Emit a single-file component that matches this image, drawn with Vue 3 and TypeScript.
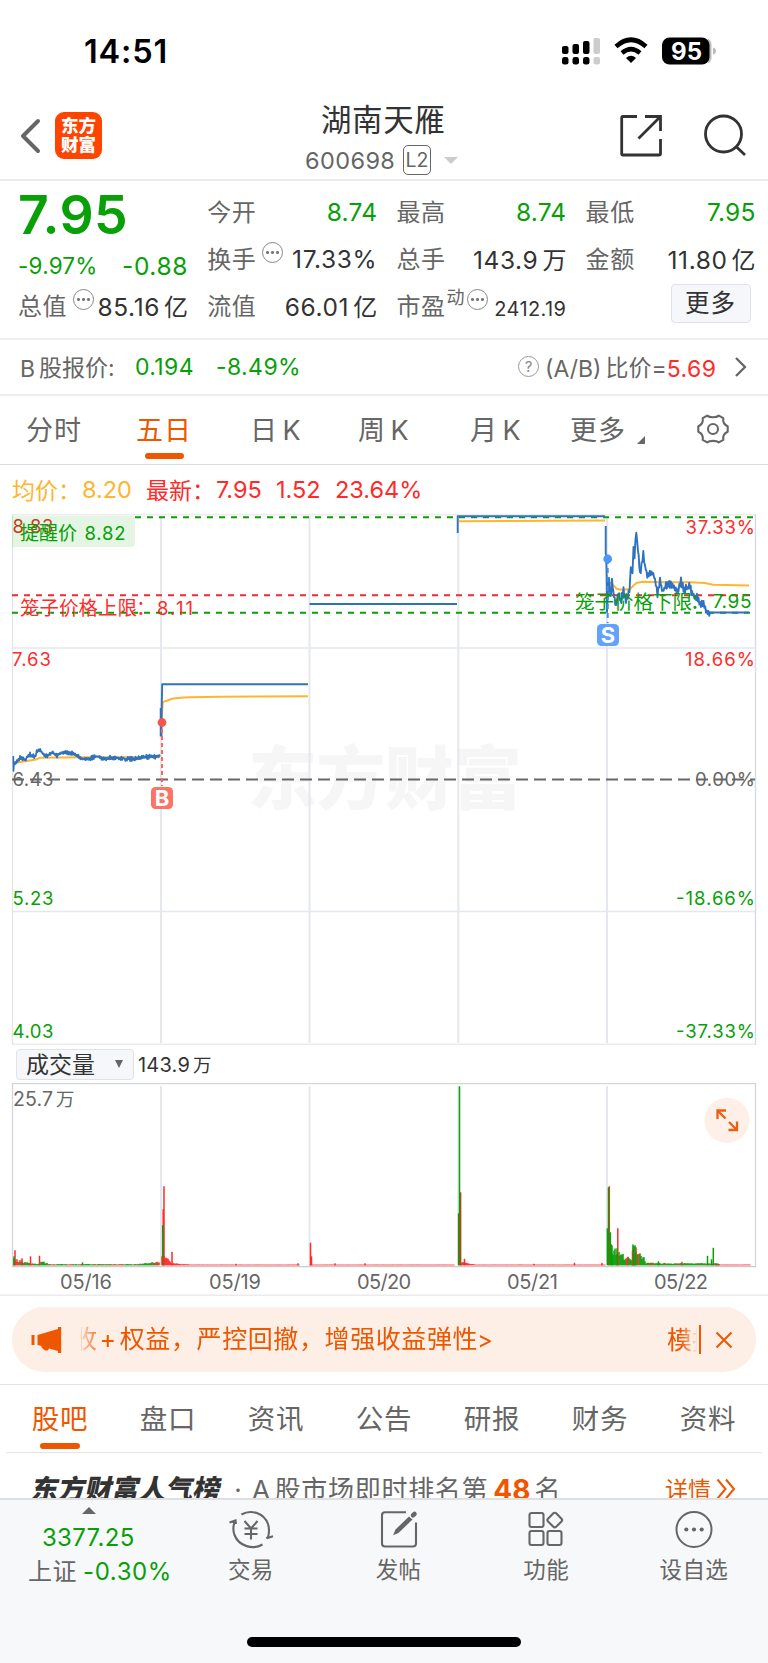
<script setup lang="ts">
type Pt = [number, number]
type Bar = { x: number; h: number; c: string }

const RED = '#ff2a2a'
const GREEN = '#07a007'

const periods = ['分时', '五日', '日 K', '周 K', '月 K', '更多']
const sections = ['股吧', '盘口', '资讯', '公告', '研报', '财务', '资料']
const dates = [
  { t: '05/16', x: 60, w: 52 },
  { t: '05/19', x: 209, w: 52 },
  { t: '05/20', x: 357, w: 54 },
  { t: '05/21', x: 507, w: 51 },
  { t: '05/22', x: 654, w: 54 },
]
const columns = [161, 309.5, 458.3, 607]

let seed = 7
function rand(): number {
  seed = (seed * 16807) % 2147483647
  return seed / 2147483647
}

function toPath(pts: Pt[]): string {
  return pts.map((p, i) => `${i ? 'L' : 'M'}${p[0].toFixed(1)} ${p[1].toFixed(1)}`).join('')
}

/* Interpolates between key prices and adds minute-level jitter. */
function jitter(keys: Pt[], amp: number, step: number): Pt[] {
  const out: Pt[] = []
  let sign = 1
  for (let i = 0; i < keys.length - 1; i++) {
    const [x0, y0] = keys[i]
    const [x1, y1] = keys[i + 1]
    const n = Math.max(1, Math.round((x1 - x0) / step))
    for (let k = 0; k < n; k++) {
      sign = -sign
      const t = k / n
      out.push([x0 + (x1 - x0) * t, y0 + (y1 - y0) * t + sign * rand() * amp])
    }
  }
  out.push(keys[keys.length - 1])
  return out
}

const day1 = toPath([
  [13.3, 756], [13.5, 771],
  ...jitter([[14, 762], [16, 763], [20, 757.5], [25, 760], [30, 754.5], [35, 757], [37.5, 750], [41, 751], [45, 756.5], [52, 753], [57, 755.5], [62, 752.5], [72, 753.5], [80, 757], [85, 760], [97, 756], [103, 759.5], [110, 757], [127, 759], [134, 759], [144, 757], [160, 756.5]], 2.3, 0.8),
])
const avg1 = toPath([[14, 764], [17, 762.5], [36, 759.5], [40, 757.7], [83, 757.3], [160, 757.3]])
const day2 = 'M160.7 708V736.5M161.5 736V717L162.2 684.3H308'
const avg2 = 'M161.8 718L162.7 703Q163.5 701 167 700.7L172 698.8Q180 697.4 190 697.2L220 696.7L308 696.3'
const day5 = toPath([
  [606, 554], [606.5, 569], [607, 612], [608.5, 580],
  ...jitter([[609, 580], [610.7, 598], [612, 580], [614, 596], [616, 608], [618.5, 591], [620.5, 603], [623.5, 590], [626, 600], [629.5, 592], [630.8, 567], [632.5, 573], [633.5, 547], [634.5, 556], [636.3, 532], [638, 550], [640, 574], [643.3, 554], [645, 567], [648, 577], [651.5, 572], [655, 579], [657.5, 595], [660, 578], [662, 591], [666, 586], [670, 584], [674, 587], [677.5, 592], [681, 581], [683.5, 590], [690, 586], [692, 594], [697, 597], [700, 604], [703.5, 602], [706, 611], [710, 612.5]], 4, 0.8),
  [749, 612.5],
])
const avg5 = toPath([[607, 575], [608, 581], [613, 585], [617, 589], [622, 589.7], [630, 589], [634, 585], [637, 582.7], [643, 581.8], [660, 582.3], [690, 582.2], [705, 583], [713, 584.7], [749, 585.4]])

function tail(x0: number, x1: number, h0: number, h1: number, c: (i: number) => string): Bar[] {
  const out: Bar[] = []
  let i = 0
  for (let x = x0; x < x1; x += 1) {
    const t = (x - x0) / (x1 - x0)
    out.push({ x, h: Math.max(0.6, (h0 + (h1 - h0) * t) * (0.6 + rand() * 0.6)), c: c(i++) })
  }
  return out
}
const mix = (p: number) => () => (rand() < p ? RED : GREEN)

const bars: Bar[] = [
  ...tail(14, 29, 6, 2.5, mix(0.4)),
  ...tail(29, 41, 2, 1.5, mix(0.4)),
  ...tail(41, 50, 4, 1, mix(0.1)),
  ...tail(50, 138, 1.1, 1.1, mix(0.4)),
  ...tail(138, 160, 1.2, 3.5, mix(0.4)),
  ...tail(164, 172, 12, 1.5, () => RED),
  ...tail(172, 190, 1.8, 1, () => RED),
  ...tail(190, 300, 0.6, 0.6, () => RED),
  ...tail(310, 455, 0.6, 0.6, () => RED),
  ...tail(460, 475, 3, 1, () => RED),
  ...tail(475, 606, 0.6, 0.6, () => RED),
  { x: 609.3, h: 79, c: RED }, { x: 607.4, h: 37, c: GREEN }, { x: 608.5, h: 78, c: GREEN },
  ...tail(612, 634, 16, 4, mix(0.12)),
  ...tail(633, 646, 20, 5, mix(0.05)),
  ...tail(646, 720, 2.2, 1.8, mix(0.2)),
  ...tail(716, 751, 0.6, 0.6, () => RED),
  { x: 15, h: 15, c: RED }, { x: 14, h: 9, c: GREEN }, { x: 22, h: 7, c: RED }, { x: 30.5, h: 9, c: RED },
  { x: 39.5, h: 9.5, c: RED }, { x: 82.5, h: 3, c: GREEN },
  { x: 164, h: 79, c: RED }, { x: 163.2, h: 56, c: RED }, { x: 162.7, h: 40, c: GREEN }, { x: 162, h: 9, c: RED },
  { x: 172, h: 13.5, c: RED }, { x: 310.5, h: 22.5, c: RED }, { x: 311.5, h: 9, c: RED }, { x: 298, h: 2, c: RED },
  { x: 335, h: 2, c: RED }, { x: 365, h: 2, c: RED }, { x: 236, h: 1.5, c: RED },
  { x: 458.6, h: 52, c: '#c33c1c' }, { x: 460.6, h: 73, c: '#c33c1c' }, { x: 459.5, h: 179, c: GREEN },
  { x: 464.5, h: 6.5, c: RED }, { x: 534, h: 1.5, c: RED }, { x: 574.5, h: 2.5, c: RED }, { x: 602, h: 2.5, c: RED },
  { x: 610.3, h: 33, c: GREEN },
  { x: 611.2, h: 21, c: GREEN }, { x: 612, h: 20, c: GREEN }, { x: 617.8, h: 37, c: RED }, { x: 617, h: 17, c: GREEN },
  { x: 627.5, h: 8, c: RED }, { x: 632.5, h: 15, c: RED }, { x: 636, h: 18, c: RED }, { x: 633.5, h: 18.5, c: GREEN }, { x: 635, h: 20, c: GREEN },
  { x: 658.5, h: 4, c: GREEN }, { x: 682, h: 3.5, c: RED },
  { x: 707.5, h: 9.5, c: GREEN }, { x: 711.5, h: 6, c: GREEN }, { x: 713.3, h: 17.5, c: GREEN },
]
</script>

<template>
  <div class="page">
    <div class="status">
      <span class="clock">14:51</span>
      <svg class="status-icons" width="160" height="30" viewBox="560 36 160 30">
        <g>
          <rect x="562" y="46" width="6.5" height="8" rx="2" /><rect x="572.5" y="44" width="6.5" height="10" rx="2" />
          <rect x="583" y="41" width="6.5" height="13" rx="2" /><rect x="593.5" y="38" width="6.5" height="16" rx="2" fill="#ccc" />
          <rect x="562" y="57" width="6.5" height="7.6" rx="2.4" /><rect x="572.5" y="57" width="6.5" height="7.6" rx="2.4" />
          <rect x="583" y="57" width="6.5" height="7.6" rx="2.4" /><rect x="593.5" y="57" width="6.5" height="7.6" rx="2.4" fill="#ccc" />
        </g>
        <path d="M616 46.5Q631 33 646 46.5" fill="none" stroke="#000" stroke-width="4.6" />
        <path d="M622 53Q631 45.2 640 53" fill="none" stroke="#000" stroke-width="4.4" />
        <path d="M626 58Q631 53.6 636 58L631 63Z" />
        <path d="M708 38.5Q711.500 40.500 711.500 45V57Q711.500 61.500 708 63.500Z" fill="#bbb" />
        <rect x="662" y="37.500" width="47.500" height="27" rx="7.500" />
        <path d="M713 47.500Q716 48.500 716 51T713 54.500Z" fill="#bbb" />
        <text x="671" y="60" fill="#fff" font-size="24" font-weight="700" textLength="31">95</text>
      </svg>
    </div>

    <header class="nav">
      <svg class="back" width="24" height="38" viewBox="0 0 24 38"><path d="M20 4L5 19L20 34" fill="none" stroke="#666" stroke-width="4" stroke-linecap="round" stroke-linejoin="round" /></svg>
      <div class="logo"><span>东方</span><span>财富</span></div>
      <div class="title-box">
        <div class="title">湖南天雁</div>
        <div class="code"><span>600698</span><b>L2</b><i class="caret"></i></div>
      </div>
      <svg class="nav-icons" width="128" height="44" viewBox="620 114 128 44" fill="none" stroke="#333" stroke-width="2.8">
        <path d="M637 116.500H623Q621.700 116.500 621.700 118V153.500Q621.700 155 623 155H659Q660.500 155 660.500 153.500V139M645 116.500H660.500V131M660 117L638.500 138.500" />
        <circle cx="723.500" cy="134" r="18" /><path d="M736 146.500L745 155" />
      </svg>
    </header>

    <section class="quote">
      <div class="price">
        <strong>7.95</strong>
        <div class="change"><span>-9.97%</span><em>-0.88</em></div>
      </div>
      <div class="cell"><label>今开</label><span class="up">8.74</span></div>
      <div class="cell"><label>最高</label><span class="up">8.74</span></div>
      <div class="cell"><label>最低</label><span class="up">7.95</span></div>
      <div class="cell"><label>换手</label><i class="dots"></i><span>17.33%</span></div>
      <div class="cell"><label>总手</label><span>143.9<u>万</u></span></div>
      <div class="cell"><label>金额</label><span>11.80<u>亿</u></span></div>
      <div class="cell"><label>总值</label><i class="dots"></i><span>85.16<u>亿</u></span></div>
      <div class="cell"><label>流值</label><span>66.01<u>亿</u></span></div>
      <div class="cell pe"><label>市盈</label><sup>动</sup><i class="dots"></i><span class="small">2412.19</span></div>
      <div class="cell end"><button>更多</button></div>
    </section>

    <section class="bshare">
      <span class="b-label">B<u>股报价:</u></span>
      <span class="b-val">0.194</span>
      <span class="b-pct">-8.49%</span>
      <i class="help">?</i>
      <span class="ratio">(A/B)<u>比价=</u><b>5.69</b></span>
      <svg width="14" height="22" viewBox="0 0 14 22"><path d="M2 2L11 11L2 20" fill="none" stroke="#666" stroke-width="2.300" /></svg>
    </section>

    <nav class="periods">
      <span v-for="(p, i) in periods" :key="p" :class="['p' + i, { on: i === 1 }]">{{ p }}</span>
      <svg class="corner" width="8" height="8" viewBox="0 0 8 8"><path d="M8 0V8H0Z" fill="#666" /></svg>
      <svg class="gear" width="32" height="30" viewBox="0 0 32 30" fill="none" stroke="#666" stroke-width="2.100" stroke-linejoin="round">
        <path d="M10.200 1.600C12.500 3.700 19.500 3.700 21.800 1.600L26.300 4.200C25.700 8 27.500 11 30.700 12.300V17.700C27.500 19 25.700 22 26.300 25.800L21.800 28.400C19.500 26.300 12.500 26.300 10.200 28.400L5.700 25.800C6.300 22 4.500 19 1.300 17.700V12.300C4.500 11 6.300 8 5.700 4.200Z" />
        <circle cx="16" cy="15" r="5" />
      </svg>
    </nav>

    <div class="legend">
      <span class="avg cn">均价：</span><span class="avg n1">8.20</span>
      <span class="cn">最新：</span><span class="n2">7.95</span><span class="n3">1.52</span><span class="n4">23.64%</span>
    </div>

    <svg class="chart" width="768" height="531" viewBox="0 514 768 531">
      <text x="248" y="804" class="mark" textLength="274">东方财富</text>
      <g stroke="#e4e8ee" stroke-width="2" fill="none">
        <path v-for="x in columns" :key="x" :d="`M${x} 516V1043`" />
        <path d="M12 648H755M12 911.500H755" stroke-width="1.500" />
        <path d="M12 514.500H756M12 1044.500H756" stroke="#ececec" />
        <path d="M12.500 514V1045" stroke="#e2e4e8" stroke-width="1.200" />
        <path d="M755.500 514V1045" stroke="#d8dbe2" stroke-width="1.400" />
      </g>
      <g font-size="18.500">
        <text x="12.500" y="533" fill="#e0311c" textLength="41">8.83</text>
        <path d="M12 516H131Q135 516 135 520V543Q135 547 131 547H12Z" fill="#07a007" fill-opacity=".11" />
        <text x="20" y="539.500" :fill="GREEN" font-size="19" textLength="57">提醒价</text><text x="84.500" y="539.500" :fill="GREEN" textLength="41">8.82</text>
      </g>
      <g fill="none" stroke-width="2" stroke-dasharray="6 6">
        <path d="M135 517.300H755" :stroke="GREEN" />
        <path d="M12 595.300H755" stroke="#ee2a35" />
        <path d="M12 612.700H755" :stroke="GREEN" />
        <path d="M12 779.500H755" stroke="#666" stroke-dasharray="12 6" />
      </g>
      <g fill="none" stroke="#ffb52e" stroke-width="2">
        <path :d="avg1" /><path :d="avg2" /><path d="M459 521.200L605 520.400" /><path :d="avg5" />
      </g>
      <g fill="none" stroke="#2f72c0" stroke-width="1.900" stroke-linejoin="round">
        <path :d="day1" stroke-width="1.700" /><path :d="day2" /><path d="M309.500 604H457" /><path d="M457.700 533V516.300H605" /><path d="M605.700 526V554" /><path :d="day5" />
      </g>
      <g stroke-width="2">
        <path d="M162 722V786" stroke="#ff6558" stroke-dasharray="4 3" /><circle cx="162" cy="722.500" r="4.400" fill="#f4564c" />
        <path d="M607.700 559V623" stroke="#3f8cf3" stroke-dasharray="5 4" /><circle cx="607.700" cy="559" r="4.400" fill="#4a95ff" />
      </g>
      <rect x="151" y="787" width="22" height="22" rx="4.500" fill="#fb7466" />
      <text x="162" y="806" class="tag" textLength="14.500">B</text>
      <rect x="597" y="624" width="22" height="22" rx="4.500" fill="#62a2fb" />
      <text x="608" y="643" class="tag" textLength="14">S</text>
      <g font-size="18.500">
        <g :fill="RED">
          <text x="20" y="614.500" font-size="19.500" textLength="117">笼子价格上限</text><text x="136" y="615" font-size="19.500">：</text><text x="157" y="614.500" textLength="36">8.11</text>
          <text x="685.500" y="533.500" textLength="69.500">37.33%</text>
          <text x="12" y="665.700" textLength="39">7.63</text>
          <text x="685" y="666" textLength="70">18.66%</text>
        </g>
        <g :fill="GREEN">
          <text x="575" y="609" font-size="19.500" textLength="117">笼子价格下限</text><text x="690" y="609" font-size="19.500">：</text><text x="712.500" y="608" font-size="19" textLength="39">7.95</text>
          <text x="12.500" y="905" textLength="41">5.23</text>
          <text x="676" y="905" textLength="79">-18.66%</text>
          <text x="12.500" y="1037.700" textLength="41">4.03</text>
          <text x="676" y="1037.700" textLength="79">-37.33%</text>
        </g>
        <g fill="#666">
          <text x="12.500" y="785.700" textLength="41">6.43</text>
          <text x="695" y="785.700" textLength="60">0.00%</text>
        </g>
      </g>
    </svg>

    <div class="vol-head">
      <div class="select"><span>成交量</span><i></i></div>
      <span class="vol-now">143.9<u>万</u></span>
    </div>

    <svg class="chart" width="768" height="213" viewBox="0 1083 768 213">
      <g fill="none" stroke="#e4e8ee" stroke-width="2">
        <path v-for="x in columns" :key="x" :d="`M${x} 1086V1265`" />
        <path d="M12.500 1267V1083.500H755.500V1267" stroke="#d3d6dd" stroke-width="1.300" />
        <path d="M12 1266.600H756" stroke="#c9cbd0" stroke-width="1.200" />
        <path d="M0 1295.300H768" stroke="#ebebee" stroke-width="1.600" />
      </g>
      <rect v-for="(b, i) in bars" :key="i" :x="b.x - 0.75" :y="1265.3 - b.h" width="1.500" :height="b.h" :fill="b.c" />
      <g fill="#666" font-size="20">
        <text x="13" y="1105.500" font-size="19.500" textLength="40">25.7</text><text x="56" y="1105.500" font-size="18.500">万</text>
        <text v-for="d in dates" :key="d.t" :x="d.x" y="1288.800" :textLength="d.w">{{ d.t }}</text>
      </g>
      <circle cx="727" cy="1120.400" r="22.600" fill="#fef0e9" />
      <path d="M717.500 1119V1110.500H726M718 1111L725.500 1118.500M737 1121.500V1130H728.500M736.500 1129.500L729 1122" fill="none" stroke="#ef5d10" stroke-width="2.300" />
    </svg>

    <div class="notice">
      <svg class="horn" width="32" height="28" viewBox="31 1326 32 28"><path d="M31.500 1335H34.500V1345H31.500ZM37.500 1335L58 1329V1327H61.200V1353H58V1351L49 1348.500L48 1350.500H45L41.500 1347.500V1346L37.500 1345Z" fill="#ef5600" /></svg>
      <span class="scroll">收<b>+</b>权益，严控回撤，增强收益弹性<s>&gt;</s></span>
      <span class="next">模拟</span>
      <i class="bar"></i>
      <svg width="18" height="18" viewBox="0 0 18 18"><path d="M1.500 1.500L16.500 16.500M16.500 1.500L1.500 16.500" stroke="#ef5600" stroke-width="2" /></svg>
    </div>

    <nav class="sections">
      <span v-for="(s, i) in sections" :key="s" :class="{ on: i === 0 }">{{ s }}</span>
    </nav>

    <div class="rank">
      <b class="board">东方财富人气榜</b>
      <span class="dot">·</span>
      <span class="rk a">A</span><span class="rk">股市场即时排名第</span><strong>48</strong><span class="rk">名</span>
      <span class="detail">详情</span>
      <svg width="20" height="22" viewBox="0 0 20 22"><path d="M1.500 1.500L9.500 11L1.500 20.500M10 1.500L18 11L10 20.500" fill="none" stroke="#ef5600" stroke-width="2" /></svg>
    </div>

    <footer class="dock">
      <div class="index">
        <i></i>
        <div class="pts">3377.25</div>
        <div class="sh"><span>上证</span><em>-0.30%</em></div>
      </div>
      <div class="item">
        <svg width="46" height="40" viewBox="0 0 46 40" fill="none" stroke="#666" stroke-width="2.100">
          <path d="M13.500 4.500C23-1 36 3 40 14Q42 20 40 27.500M38.500 27L39.500 28L45 26.300M34.500 34.500C25 40 11 36.500 6.500 25Q4 18 7 11M1.500 12.500L7.500 10.500L8 14M16.500 11L23 18.500L29.500 11M16.500 18.500H29.500M16.500 24H29.500M23 18.500V29.500" />
        </svg><span>交易</span>
      </div>
      <div class="item">
        <svg width="46" height="40" viewBox="0 0 46 40" fill="none" stroke="#666" stroke-width="2.100">
          <path d="M30 2.300H9Q6 2.300 6 5.300V33.500Q6 36.500 9 36.500H37Q40 36.500 40 33.500V12.500" /><path d="M17 25.300L19.500 19.500L33 6.500L36.500 9.500L22.500 23Z" fill="#666" stroke="none" /><path d="M37 5.300L38.500 4" stroke-width="4.500" stroke-linecap="round" />
        </svg><span>发帖</span>
      </div>
      <div class="item">
        <svg width="46" height="40" viewBox="0 0 46 40" fill="none" stroke="#666" stroke-width="2.100">
          <rect x="6.500" y="3" width="14" height="14" rx="2" /><rect x="6.500" y="21" width="14" height="14" rx="2" /><rect x="24.500" y="21" width="14" height="14" rx="2" /><rect x="26" y="4.300" width="11.500" height="11.500" rx="2" transform="rotate(45 31.750 10.050)" />
        </svg><span>功能</span>
      </div>
      <div class="item">
        <svg width="46" height="40" viewBox="0 0 46 40" fill="none" stroke="#666" stroke-width="2"><circle cx="23" cy="19.500" r="17.500" /><g fill="#666" stroke="none"><circle cx="15.300" cy="19.500" r="2.100" /><circle cx="23" cy="19.500" r="2.100" /><circle cx="30.700" cy="19.500" r="2.100" /></g></svg><span>设自选</span>
      </div>
      <i class="home"></i>
    </footer>
  </div>
</template>

<style>
body { margin: 0; background: #fff; }
</style>

<style scoped>
.page { width: 768px; height: 1663px; overflow: hidden; display: flex; flex-direction: column; background: #fff; color: #333; font-family: Inter, "Noto Sans CJK SC", sans-serif; }
.page > * { flex: none; box-sizing: border-box; }
svg { display: block; flex: none; }
span, b, em, strong, label { white-space: nowrap; }
i, em { font-style: normal; }
u, s { text-decoration: none; }
.status { height: 100px; display: flex; padding-top: 36px; }
.clock { margin-left: 84px; width: 476px; font-size: 32.500px; font-weight: 600; line-height: 31px; color: #000; letter-spacing: .8px; }
.nav { height: 81px; border-bottom: 2px solid #ebebeb; display: flex; align-items: flex-start; }
.back { margin: 17px 0 0 18px; }
.logo { margin: 12px 0 0 13px; width: 47px; height: 47px; border-radius: 9px; background: #ff4400; color: #fff; display: flex; flex-direction: column; align-items: center; padding-top: 4px; box-sizing: border-box; font-weight: 900; font-size: 17.500px; line-height: 19px; }
.title-box { width: 200px; margin-left: 204px; }
.title { margin-left: 15px; font-size: 30.500px; letter-spacing: .6px; line-height: 40px; }
.code { display: flex; align-items: center; height: 30px; margin-top: 5px; color: #666; font-size: 23.500px; }
.code span { width: 98px; letter-spacing: .4px; margin-left: -1px; }
.code b { width: 26px; height: 28px; border: 1px solid #666; border-radius: 5px; text-align: center; line-height: 29px; font-size: 19.500px; font-weight: 400; }
.caret { margin-left: 13px; border: 7px solid transparent; border-top-color: #ccc; border-bottom: 0; }
.nav-icons { margin: 14px 0 0 114px; }
.quote { height: 159px; border-bottom: 2px solid #efefef; padding: 7px 13px 0 18px; display: grid; grid-template-columns: repeat(4, 170px); grid-template-rows: repeat(3, 47px); column-gap: 19.200px; }
.price { grid-row: span 2; color: #07a007; }
.price strong { display: block; font-size: 53.500px; font-weight: 600; line-height: 54px; letter-spacing: .4px; }
.change { display: flex; justify-content: space-between; line-height: 38px; margin-top: 5px; font-size: 22.500px; letter-spacing: .2px; }
.change em { font-size: 24.500px; letter-spacing: .6px; }
.cell { display: flex; align-items: center; justify-content: space-between; font-size: 24.500px; height: 47px; letter-spacing: .6px; }
.cell label { font-size: 24px; color: #666; letter-spacing: .6px; margin-bottom: 2px; }
.cell u { font-size: 24px; margin-left: 4px; letter-spacing: 0; }
.cell span { margin-left: auto; }
.cell .up { color: #07a007; letter-spacing: .2px; }
.dots { width: 19px; height: 19px; border: 1.500px solid #888; border-radius: 50%; margin: 0 -2px 12px 6px; flex: none; background: radial-gradient(circle at 4.500px 9.500px, #777 1.200px, transparent 1.800px), radial-gradient(circle at 9.500px 9.500px, #777 1.200px, transparent 1.800px), radial-gradient(circle at 14.500px 9.500px, #777 1.200px, transparent 1.800px); }
.pe sup { font-size: 18px; line-height: 18px; color: #666; margin: 0 0 15px 1px; letter-spacing: 0; }
.pe .dots { margin-left: 2px; }
.cell .small { font-size: 20px; margin-top: 7px; letter-spacing: .4px; }
.cell.end { justify-content: flex-end; }
button { width: 80px; height: 39px; margin: -4px 5px 0 0; padding: 0; border: 1.500px solid #dfe2e7; border-radius: 4px; background: #f6f7fa; font: 24.500px/35px Inter, "Noto Sans CJK SC", sans-serif; color: #333; letter-spacing: 1px; }
.bshare { height: 56px; border-bottom: 2px solid #ededed; display: flex; align-items: center; color: #666; font-size: 23px; padding-bottom: 1px; }
.bshare u { font-size: 23px; margin-left: 4px; position: relative; top: -1px; }
.b-label { margin-left: 20px; width: 115px; }
.b-val, .b-pct { color: #07a007; letter-spacing: .4px; }
.b-val { width: 81px; }
.b-pct { width: 302px; }
.help { width: 19px; height: 19px; border: 1.500px solid #999; border-radius: 50%; font-size: 15px; line-height: 19px; text-align: center; color: #888; }
.ratio { margin-left: 6px; width: 189px; }
.ratio b { font-weight: 400; color: #ff2a2a; letter-spacing: .5px; }
.periods { height: 69px; border-bottom: 1.500px solid #d9dbe0; display: flex; align-items: flex-start; font-size: 27px; color: #666; line-height: 70px; }
.periods span { letter-spacing: 1px; word-spacing: -4px; position: relative; }
.p0 { width: 110px; margin-left: 26px; }
.p1 { width: 114px; }
.p2 { width: 108px; }
.p3 { width: 112px; }
.p4 { width: 100px; }
.p5 { width: 67px; }
.on { color: #ef5600; }
.periods .on::after { content: ""; position: absolute; left: 9px; top: 57px; width: 39px; height: 6px; border-radius: 3px; background: #ef5600; }
.corner { margin-top: 40px; }
.gear { margin: 18px 0 0 52px; }
.legend { height: 49px; display: flex; align-items: center; color: #ff2a2a; font-size: 23.500px; padding-left: 12px; }
.legend .avg { color: #ffb52e; }
.cn { font-size: 23px; width: 70px; margin-bottom: 2px; }
.n1 { width: 64px; }
.n2 { width: 60px; }
.n3 { width: 59px; }
.chart text { font-family: Inter, "Noto Sans CJK SC", sans-serif; }
.mark { font-size: 69px; font-weight: 900; fill: #f6f6f6; }
.tag { font-size: 22px; font-weight: 700; fill: #fff; text-anchor: middle; }
.vol-head { height: 38px; display: flex; align-items: center; padding-left: 16px; }
.select { width: 118px; height: 31px; box-sizing: border-box; border: 1.500px solid #dfe2e7; border-radius: 4px; background: #f6f7fa; display: flex; align-items: center; justify-content: space-between; padding: 0 10px 0 9px; font-size: 23px; line-height: 30px; }
.select span { padding-top: 1px; }
.select i { border: 4.500px solid transparent; border-top: 8px solid #666; border-bottom: 0; }
.vol-now { margin-left: 4px; font-size: 20px; letter-spacing: .2px; }
.vol-now u { font-size: 18.500px; margin-left: 3px; }
.notice { margin: 11px 12px 0; height: 65px; border-radius: 33px; background: #fdeee6; color: #ef5600; display: flex; align-items: center; font-size: 25px; padding-left: 19px; }
.scroll { margin-left: 18px; width: 586px; overflow: hidden; letter-spacing: .6px; text-indent: -9px; line-height: 36px; -webkit-mask-image: linear-gradient(90deg, rgba(0, 0, 0, .15), #000 22px); mask-image: linear-gradient(90deg, rgba(0, 0, 0, .15), #000 22px); }
.scroll b { font-weight: 400; margin: 0 3px 0 2px; }
.scroll s { font-size: 23.500px; margin-left: -1px; }
.next { width: 30px; overflow: hidden; line-height: 36px; -webkit-mask-image: linear-gradient(90deg, #000 14px, transparent 31px); mask-image: linear-gradient(90deg, #000 14px, transparent 31px); }
.bar { width: 1.500px; height: 29px; background: #ef5600; margin: 0 14px 0 2px; }
.sections { margin-top: 12px; height: 69px; border-top: 1.500px solid #e3e3e6; display: grid; grid-template-columns: repeat(7, 108px); padding: 0 6px; font-size: 27.500px; color: #666; line-height: 69px; text-align: center; background: linear-gradient(#e3e5e9, #e3e5e9) 6px 100% / 756px 1.500px no-repeat; }
.sections span { position: relative; letter-spacing: .8px; }
.sections .on::after { content: ""; position: absolute; left: 34px; top: 58px; width: 40px; height: 6px; border-radius: 3px; background: #ef5600; }
.rank { height: 45px; overflow: hidden; display: flex; align-items: flex-start; padding: 17px 0 0 32px; font-size: 26px; line-height: 40px; color: #666; }
.board { width: 192px; font-size: 27px; font-weight: 900; color: #333; transform: skewX(-12deg); }
.dot { width: 28px; text-align: center; }
.rk { letter-spacing: .7px; }
.rk.a { margin-right: 4px; }
.rank strong { color: #ef5600; font-size: 28px; margin: 0 4px 0 5px; }
.detail { margin-left: auto; font-size: 23px; color: #ef5600; }
.rank svg { margin: 8px 32px 0 5px; }
.dock { height: 166px; background: #f7f8fa; border-top: 2px solid #dedfe2; display: flex; position: relative; color: #666; }
.index { width: 177px; }
.index i { display: block; width: 0; margin: 7px 0 0 82px; border: 7px solid transparent; border-bottom-color: #666; border-top: 0; }
.pts { margin-left: 42px; font-size: 24px; line-height: 34px; margin-top: 7px; color: #07a007; letter-spacing: .3px; }
.sh { display: flex; margin-left: 28px; font-size: 24px; line-height: 34px; color: #07a007; letter-spacing: .6px; }
.sh span { color: #666; width: 55px; }
.item { width: 147.700px; display: flex; flex-direction: column; align-items: center; padding-top: 10px; font-size: 22.500px; }
.item span { line-height: 34px; margin-top: 3px; letter-spacing: .4px; }
.home { position: absolute; left: 247px; bottom: 17.500px; width: 274px; height: 10px; border-radius: 5px; background: #000; }
</style>
